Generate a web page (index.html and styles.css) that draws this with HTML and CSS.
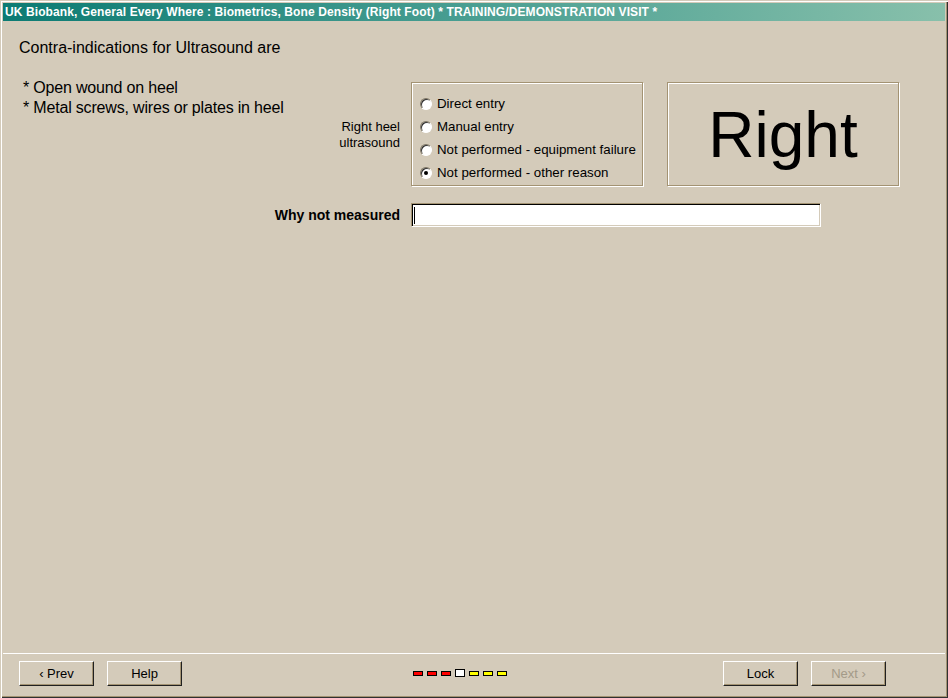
FILE: index.html
```html
<!DOCTYPE html>
<html lang="en">
<head>
    <meta charset="UTF-8">
    <title>Bone Density (Right Foot)</title>
    <link rel="stylesheet" href="styles.css">
</head>
<body>
    <div class="window">
        <div class="titlebar">UK Biobank, General Every Where : Biometrics, Bone Density (Right Foot) * TRAINING/DEMONSTRATION VISIT *</div>
        <div class="content">
            <div class="heading">Contra-indications for Ultrasound are</div>
            <div class="top-row">
                <div class="notes">
                    <div>* Open wound on heel</div>
                    <div>* Metal screws, wires or plates in heel</div>
                </div>
                <div class="field-label">Right heel<br>ultrasound</div>
                <div class="group-box">
                    <label class="radio"><span class="dot"></span>Direct entry</label>
                    <label class="radio"><span class="dot"></span>Manual entry</label>
                    <label class="radio"><span class="dot"></span>Not performed - equipment failure</label>
                    <label class="radio"><span class="dot checked"></span>Not performed - other reason</label>
                </div>
                <div class="side-box">Right</div>
            </div>
            <div class="why-row">
                <div class="why-label">Why not measured</div>
                <div class="text-input"><span class="caret"></span></div>
            </div>
        </div>
        <div class="footer">
            <div class="btn-group">
                <div class="btn">&lsaquo; Prev</div>
                <div class="btn">Help</div>
            </div>
            <div class="progress">
                <span class="dash red"></span>
                <span class="dash red"></span>
                <span class="dash red"></span>
                <span class="dash current"></span>
                <span class="dash yellow"></span>
                <span class="dash yellow"></span>
                <span class="dash yellow"></span>
            </div>
            <div class="btn-group right">
                <div class="btn">Lock</div>
                <div class="btn disabled">Next &rsaquo;</div>
            </div>
        </div>
    </div>
</body>
</html>
```

FILE: styles.css
```css
html, body{
    margin: 0;
    padding: 0;
    background-color: #d4cbba;
}
/* window frame */
.window{
    box-sizing: border-box;
    width: 948px;
    height: 698px;
    padding: 3px;
    background-color: #d4cbba;
    box-shadow: inset 1px 1px 0 #d4cbba, inset 2px 2px 0 #fff, inset -1px -1px 0 #303030, inset -2px -2px 0 #a39373;
    display: flex;
    flex-direction: column;
    font-family: "Liberation Sans", Arial, sans-serif;
    color: #000;
}
.titlebar{
    height: 18px;
    line-height: 18px;
    padding-left: 2px;
    background: linear-gradient(to right, #0c7b73, #4a9f92 50%, #88c0ab);
    color: #fff;
    font-weight: bold;
    font-size: 12px;
    letter-spacing: 0.1px;
    white-space: nowrap;
    overflow: hidden;
}
.content{
    flex: 1;
}
.heading{
    margin: 17px 0 0 16px;
    font-size: 16px;
    line-height: 20px;
}
/* upper block: notes, radio group, big label */
.top-row{
    display: flex;
    margin-top: 20px;
}
.notes{
    width: 307px;
    padding-left: 20px;
    font-size: 16px;
    line-height: 20px;
    letter-spacing: -0.18px;
}
.field-label{
    width: 70px;
    align-self: center;
    margin-top: 6px;
    text-align: right;
    font-size: 13px;
    line-height: 16px;
}
.group-box{
    box-sizing: border-box;
    width: 232px;
    height: 104px;
    margin: 4px 0 0 11px;
    padding: 11px 0 0 8px;
    border: 1px solid #a39373;
    box-shadow: 1px 1px 0 #fff, inset 1px 1px 0 #fff;
}
.radio{
    display: flex;
    align-items: center;
    height: 23px;
    font-size: 13.3px;
    white-space: nowrap;
    margin-top: -2px;
    margin-bottom: 2px;
}
.dot{
    box-sizing: border-box;
    position: relative;
    width: 12px;
    height: 12px;
    margin-right: 5px;
    border-radius: 50%;
    background-color: #fff;
    border: 1px solid;
    border-color: #7d7462 #fff #fff #7d7462;
    box-shadow: inset 1px 1px 0 #303030;
}
.dot.checked::after{
    content: "";
    position: absolute;
    left: 3px;
    top: 3px;
    width: 4px;
    height: 4px;
    border-radius: 50%;
    background-color: #000;
}
.side-box{
    box-sizing: border-box;
    width: 232px;
    height: 104px;
    margin: 4px 0 0 24px;
    border: 1px solid #a39373;
    box-shadow: 1px 1px 0 #fff, inset 1px 1px 0 #fff;
    font-size: 64px;
    line-height: 104px;
    text-align: center;
}
/* reason row */
.why-row{
    display: flex;
    align-items: center;
    margin-top: 17px;
}
.why-label{
    width: 397px;
    margin-right: 11px;
    text-align: right;
    font-weight: bold;
    font-size: 14px;
}
.text-input{
    box-sizing: border-box;
    width: 410px;
    height: 24px;
    padding: 3px 0 0 1px;
    background-color: #fff;
    border: 1px solid;
    border-color: #a39373 #fff #fff #a39373;
    box-shadow: inset 1px 1px 0 #000, inset -1px -1px 0 #d4cbba;
}
.caret{
    display: block;
    width: 1px;
    height: 17px;
    margin-left: 1px;
    background-color: #000;
}
/* bottom bar */
.footer{
    display: flex;
    align-items: center;
    height: 38px;
    padding: 0 0 3px 16px;
    border-top: 1px solid #fff;
}
.btn-group{
    display: flex;
    gap: 13px;
}
.btn-group.right{
    margin-left: auto;
    margin-right: 59px;
}
.btn{
    box-sizing: border-box;
    width: 75px;
    height: 25px;
    line-height: 23px;
    text-align: center;
    font-size: 13px;
    border: 1px solid;
    border-color: #fff #202020 #202020 #fff;
    box-shadow: inset -1px -1px 0 #a39373;
}
.btn.disabled{
    color: #a39a88;
}
.progress{
    display: flex;
    align-items: center;
    gap: 4px;
    margin-left: 231px;
}
.dash{
    box-sizing: border-box;
    width: 10px;
    height: 5px;
    border: 1px solid #000;
}
.dash.red{
    background-color: #ff0000;
}
.dash.yellow{
    background-color: #ffff00;
}
.dash.current{
    height: 8px;
    background-color: #fff;
}
```
